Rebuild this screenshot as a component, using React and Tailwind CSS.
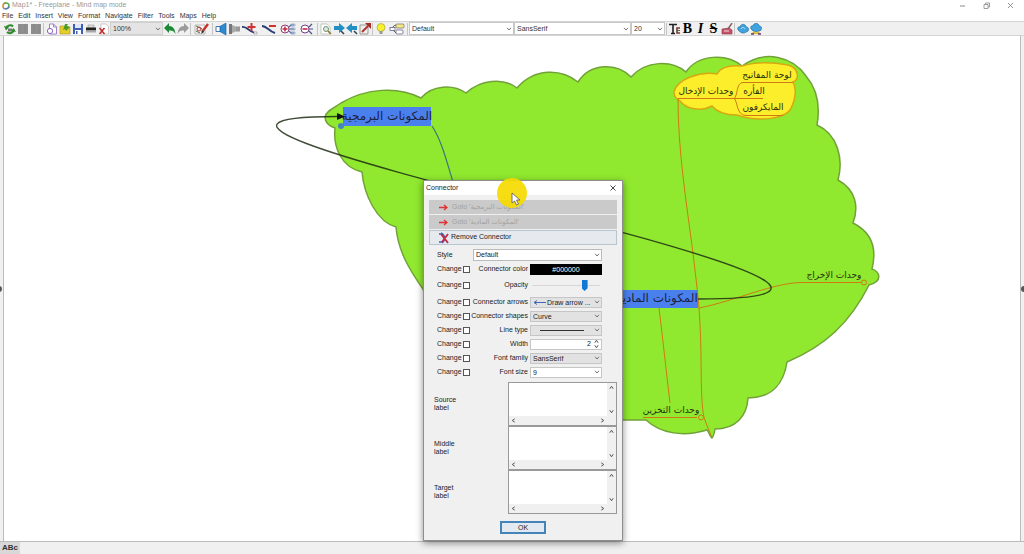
import { useState } from "react";

const MENUS = ["File", "Edit", "Insert", "View", "Format", "Navigate", "Filter", "Tools", "Maps", "Help"];

function Chevron({ className = "" }) {
  return (
    <svg viewBox="0 0 6 4" className={`pointer-events-none h-1 w-1.5 fill-none stroke-[#666] ${className}`}>
      <path d="M1 .8 3 3 5 .8" strokeWidth=".9" />
    </svg>
  );
}

function Select({ label, options, id, className = "", wrap = "" }) {
  return (
    <span className={`relative flex items-center ${wrap}`}>
      <select
        id={id}
        aria-label={label}
        className={`w-full appearance-none rounded-none border pl-0.5 outline-none ${className}`}
      >
        {options.map((o) => (
          <option key={o}>{o}</option>
        ))}
      </select>
      <Chevron className="absolute right-0.5" />
    </span>
  );
}

function Tool({ label, children, wide }) {
  return (
    <button
      type="button"
      aria-label={label}
      className={`flex h-3.5 shrink-0 items-center justify-center ${wide ? "w-[19px]" : "w-[13px]"}`}
    >
      <svg viewBox={wide ? "0 0 16 12" : "0 0 12 12"} className={`h-3 fill-none ${wide ? "w-4" : "w-3"}`}>
        {children}
      </svg>
    </button>
  );
}

function Sep() {
  return <span className="mx-px h-3 w-px shrink-0 bg-[#c4c4c4]" />;
}

function ToolBar() {
  return (
    <div className="flex h-[15px] items-center border-y border-[#d4d4d4] bg-[#f0f0f0] pl-[3px] text-[7px]">
      <Tool label="Reload">
        <path d="M2 5.5C3 2 7 1.500 9 3.500M10 6.500C9 10.500 5 11 3 9" stroke="#2f8a2c" strokeWidth="2" />
        <path d="M0 3 2 7.500 5 4ZM12 9 9.500 5 7 8Z" fill="#2f8a2c" />
        <path d="M4 5.500h4v3H4z" fill="#777" />
      </Tool>
      <Tool label="Previous map">
        <path d="M1 1h10v10H1z" fill="#8f8f8f" />
        <path d="M3 2v9M8 1v9" stroke="#868686" />
      </Tool>
      <Tool label="Next map">
        <path d="M1 1h10v10H1z" fill="#8f8f8f" />
        <path d="M4 1v9M9 2v9" stroke="#868686" />
      </Tool>
      <Sep />
      <Tool label="New map">
        <path d="M3.500 1h4l3 3v7h-7z" fill="#fff" stroke="#9d83c4" />
        <circle cx="4" cy="8" r="2.600" fill="#fff" stroke="#8d62c0" />
        <path d="M7.500 1v3h3" stroke="#9d83c4" />
      </Tool>
      <Tool label="Open map">
        <path d="M1 3h4l1 1h5v7H1z" fill="#e5ce2b" stroke="#a99318" strokeWidth=".6" />
        <path d="m6 1 3 0-1 2 3 1-4 4-1-2-2 1z" fill="#4f9c25" />
      </Tool>
      <Tool label="Save map">
        <path d="M1 1h10v10H1z" fill="#3c5fb5" />
        <path d="M3 1h6v4H3z" fill="#dfe8fa" />
        <path d="M3 7h6v4H3z" fill="#fff" />
        <path d="M4 8h1.500v3H4z" fill="#3c5fb5" />
      </Tool>
      <Tool label="Print">
        <path d="M3 2h6v3H3z" fill="#ddd" stroke="#888" strokeWidth=".5" />
        <path d="M1 4.500h10v3H1z" fill="#222" />
        <path d="M1 7.500h10v2H1z" fill="#aaa" />
      </Tool>
      <Tool label="Close map">
        <path d="M3 1h5l2.500 2.500V11H3z" fill="#fff" stroke="#b9b9b9" strokeWidth=".7" />
        <path d="m1.500 5 5 6M6.500 5l-5 6" stroke="#c22a2a" strokeWidth="1.500" />
      </Tool>
      <Select
        label="Zoom"
        options={["100%", "75%", "50%"]}
        wrap="w-[53px]"
        className="h-[13px] border-[#d0d0d0] bg-[#e4e4e4] leading-[11px] text-[#333]"
      />
      <Tool label="Undo">
        <path d="M0 5 5 0v3c4 0 6 3 6.500 8C10 8 8 7 5 7.500V10z" fill="#1c8a34" />
      </Tool>
      <Tool label="Redo">
        <path d="M12 5 7 0v3C3 3 1 6 .5 11 2 8 4 7 7 7.500V10z" fill="#9b9b9b" />
      </Tool>
      <Sep />
      <Tool label="Use format" wide>
        <path d="M1 2h10v9H1z" fill="#f6f0f0" stroke="#a8a8a8" strokeWidth=".7" />
        <path d="m2 3 6 3M2 8l4 2" stroke="#467a46" />
        <circle cx="5" cy="6" r="2" stroke="#b14040" />
        <path d="M14 1 8 9" stroke="#c2332b" strokeWidth="2.400" />
        <path d="m8.500 7-1.500 4 3-2z" fill="#333" />
      </Tool>
      <Sep />
      <Tool label="Fold">
        <path d="M11 0v12L4 8V4z" fill="#2a8ad2" stroke="#1a5a9b" strokeWidth=".6" />
        <path d="M1 3.500h4v5H1z" fill="#fff" stroke="#1a5a9b" strokeWidth=".8" />
      </Tool>
      <Tool label="Unfold">
        <path d="M1 1h3v10H1z" fill="#777" />
        <path d="m4 2 5 2v4l-5 2z" fill="#aaa" />
        <path d="M8 3.500h4v5H8z" fill="#999" />
      </Tool>
      <Tool label="New child node" wide>
        <path d="M0 4c5-1 6 4 13 6" stroke="#293c72" strokeWidth="1.800" />
        <path d="M9.500 0v8M5.500 4h8" stroke="#d23030" strokeWidth="2" />
        <path d="M12 9h3v2h-3z" fill="#fff" stroke="#777" strokeWidth=".5" />
      </Tool>
      <Tool label="Remove node" wide>
        <path d="M1 3c5 0 6 5 13 7" stroke="#293c72" strokeWidth="1.900" />
        <path d="M8 3h7" stroke="#d23030" strokeWidth="2" />
      </Tool>
      <Tool label="Unfold all" wide>
        <circle cx="5" cy="6" r="4" fill="#fff" stroke="#8b3b70" />
        <path d="M2.500 6h5M5 3.500v5" stroke="#c22944" strokeWidth="1.500" />
        <path d="M9 4l2-2h3M9 6h5M9 8l2 2h3" stroke="#4668ae" strokeWidth="1.200" />
        <path d="M11 1h4v2h-4zM11 5h4v2h-4zM11 9h4v2h-4z" stroke="#7890be" strokeWidth=".6" />
      </Tool>
      <Tool label="Fold all" wide>
        <circle cx="6" cy="6" r="4" fill="#fff" stroke="#704080" />
        <path d="M3.500 6h5" stroke="#c22944" strokeWidth="1.600" />
        <path d="m10 4 3-3M10 6h4M10 8l3 3" stroke="#46518e" strokeWidth="1.200" />
      </Tool>
      <Sep />
      <Tool label="Find">
        <path d="M1 1h6l3 3v7H1z" fill="#fff" stroke="#aab7aa" strokeWidth=".7" />
        <circle cx="6" cy="6" r="2.500" fill="#dcebdc" stroke="#759075" />
        <path d="m8 8 3 3" stroke="#8a6c32" strokeWidth="1.500" />
      </Tool>
      <Tool label="Find next">
        <path d="M1 3h5V0l6 5-6 5V7H1z" fill="#248fc3" />
        <path d="m8 8 3 3" stroke="#345" strokeWidth="1.600" />
      </Tool>
      <Tool label="Find previous">
        <path d="M11 3H6V0L0 5l6 5V7h5z" fill="#248fc3" />
        <path d="m8 8 3 3" stroke="#345" strokeWidth="1.600" />
      </Tool>
      <Tool label="Edit filter">
        <path d="M1 2h8v9H1z" fill="#eee" stroke="#777" strokeWidth=".7" />
        <path d="M3 9 9 3" stroke="#b4332d" strokeWidth="2" />
        <path d="M6 0h6v6z" fill="#a92b28" />
      </Tool>
      <Sep />
      <Tool label="Tip of the day">
        <circle cx="6" cy="4.500" r="4" fill="#f6f02d" stroke="#a8a33d" strokeWidth=".7" />
        <path d="M4.500 8h3v3h-3z" fill="#999" />
      </Tool>
      <Tool label="Node details" wide>
        <path d="M1 6c3 0 3-4 6-4M2 6c3 0 3 4 6 4" stroke="#333" strokeWidth=".8" />
        <rect x="7" y="1" width="8" height="4" rx="1" fill="#f4ec80" stroke="#767" strokeWidth=".7" />
        <rect x="7" y="7" width="7" height="4" rx="1" fill="#fff" stroke="#557" strokeWidth=".7" />
        <rect x="1" y="4.500" width="5" height="3" fill="#fff" stroke="#557" strokeWidth=".7" />
      </Tool>
      <Sep />
      <Select
        label="Node style"
        options={["Default"]}
        wrap="w-[105px]"
        className="h-[13px] border-[#c8c8c8] bg-white leading-[11px] text-[#333]"
      />
      <Select
        label="Node font"
        options={["SansSerif"]}
        wrap="w-[117px]"
        className="h-[13px] border-[#c8c8c8] bg-white leading-[11px] text-[#333]"
      />
      <Select
        label="Node font size"
        options={["20", "12", "10"]}
        wrap="w-[34px]"
        className="h-[13px] border-[#c8c8c8] bg-white leading-[11px] text-[#333]"
      />
      <Sep />
      <Tool label="Text color">
        <path d="M0 1.500h8M4 1v10M2 10.500h4" stroke="#222" strokeWidth="1.600" />
        <path d="M11 5H8v5h3" stroke="#7b3b32" strokeWidth="1.600" />
        <path d="M8 7.500h3" stroke="#3c7040" />
      </Tool>
      <button type="button" aria-label="Bold" className="w-[13px] font-['Liberation_Serif',serif] text-[14px] leading-3 font-black text-black">
        B
      </button>
      <button type="button" aria-label="Italic" className="w-[13px] font-['Liberation_Serif',serif] text-[14px] leading-3 font-bold text-black italic">
        I
      </button>
      <button
        type="button"
        aria-label="Strike through"
        className="w-[13px] font-['Liberation_Serif',serif] text-[14px] leading-3 font-black text-black line-through"
      >
        S
      </button>
      <Tool label="Remove format">
        <path d="m1 6 7-1 3 2v4H1z" fill="#c8526a" stroke="#80364a" strokeWidth=".6" />
        <path d="M7 6 11 0" stroke="#8a5a5a" strokeWidth="1.400" />
        <path d="M3 8h5" stroke="#f3d8dd" />
      </Tool>
      <Sep />
      <Tool label="Cloud">
        <path d="M2 8C-1 5 2 3 3 4c1-4 6-3 6 0 4 0 3 5 0 5-2 2-5 1-7-1z" fill="#3fa3dd" stroke="#1e6ea9" strokeWidth=".7" />
        <path d="M4 6c1-2 3-2 4 0" stroke="#c6e8fa" />
      </Tool>
      <Tool label="Cloud color">
        <path d="M2 7C-1 4 2 2 3 3c1-4 6-3 6 0 4 0 3 5 0 5-2 1-5 1-7-1z" fill="#3fa3dd" stroke="#1e6ea9" strokeWidth=".7" />
        <path d="m1 11 3-3 2 2 2-2 3 3z" fill="#d9b32c" />
        <path d="M1 11h3M8 11h3" stroke="#6a3b7c" strokeWidth="1.500" />
      </Tool>
    </div>
  );
}

function MindMap() {
  return (
    <svg
      viewBox="4 36 1016 505"
      preserveAspectRatio="xMinYMin meet"
      className="absolute inset-0 h-full w-full fill-none font-['DejaVu_Sans','Noto_Sans',sans-serif]"
    >
      {/* Cloud */}
      <path
        d="M325 117C326 111 334 108 341 103C366 88 398 86 421 98C432 85 453 84 466 93C480 80 503 77 517 88C534 68 561 68 578 82C590 63 617 62 631 77C646 60 672 60 686 72C698 54 727 53 742 66C765 49 793 57 806 76C818 90 820 108 817 125C837 134 844 158 838 180C856 190 859 207 853 223C875 234 876 253 872 269C879 271 884 281 869 285C850 323 825 346 787 362C784 382 773 398 748 398C747 416 736 429 715 429C714 435 713 437 712 438C710 437 709 432 707 430C684 437 661 434 646 420H560C480 400 440 350 423 289C411 272 398 252 396 227C377 222 364 195 362 172C341 167 333 147 335 128C329 126 325 122 325 117Z"
        fill="#90e92f"
        stroke="#72a13a"
        strokeWidth="1.500"
      />
      <path
        d="M674 92C677 79 700 71 717 74C721 66 731 65 742 66C758 61 777 63 788 65C800 68 799 81 793 82C797 89 795 100 792 106C788 120 756 122 737 115C725 115 716 111 712 106C701 112 686 109 680 101C676 99 674 96 674 92Z"
        fill="#fdee2b"
        stroke="#d6a912"
        strokeWidth="1.500"
      />

      {/* Edges */}
      <g stroke="#cf7a14">
        <path d="M763 98.500H678C678 150 686 200 693 253C696 280 699 300 700 325C702 360 700 400 704 417C706 424 709 430 712 438" />
        <path d="M734 98.500C738 96 736 82.500 743 82.500H793M734 98.500C738 101 736 115.500 746 115.500H783" />
        <path d="M699 308C735 301 775 282 803 282.500H861" />
        <path d="M659 308C663 340 666 370 670 403M643 417.500H697" />
        <circle cx="864" cy="282.500" r="2.500" />
        <circle cx="701" cy="417.500" r="2.500" />
      </g>
      <path d="M432 126C442 141 447 163 453 182" stroke="#39797a" strokeWidth="1.200" />

      {/* Nodes */}
      <path d="M343 107h88v19h-88zM600 290h98v18h-98z" fill="#4a80ee" />
      <circle cx="341" cy="126" r="3" fill="#4784bc" />
      <g fill="#1c2340" textAnchor="middle" fontSize="12">
        <text x="387" y="120">المكونات البرمجية</text>
        <text x="657" y="302">المكونات المادية</text>
      </g>
      <g fill="#26300c" textAnchor="middle" fontSize="9">
        <text x="767" y="78">لوحة المفاتيح</text>
        <text x="706" y="94">وحدات الإدخال</text>
        <text x="754" y="94">الفأره</text>
        <text x="763" y="110">المايكرفون</text>
        <text x="834" y="278">وحدات الإخراج</text>
        <text x="671" y="413">وحدات التخزين</text>
      </g>

      {/* Connector */}
      <path d="M698 299C1046 299 22 116 338 116.500" stroke="#1d2d14" strokeOpacity=".85" strokeWidth="1.400" />
      <path d="M337 113v7l8-3.500z" fill="#111" />
    </svg>
  );
}

function Row({ id, label, children, tall }) {
  return (
    <div className={`flex items-center ${tall ? "h-[19px]" : "h-3.5"}`}>
      <label className="flex w-[33px] shrink-0 items-center justify-between">
        Change
        <input type="checkbox" className="size-[7px] appearance-none border border-[#555] bg-white checked:bg-[#444]" />
      </label>
      <label htmlFor={id} className="flex-1 pr-0.5 text-right whitespace-nowrap">
        {label}
      </label>
      <div className="w-[72px] shrink-0">{children}</div>
    </div>
  );
}

function Arrow({ className = "" }) {
  return (
    <svg viewBox="0 0 6 6" className={`size-[5px] fill-none stroke-[#555] ${className}`}>
      <path d="M1 4.500 3 1.500 5 4.500" strokeWidth="1.200" />
    </svg>
  );
}

function LabelArea({ id, label }) {
  return (
    <div className="flex items-center">
      <label htmlFor={id} className="w-[79px] pr-12 pl-[5px] leading-2">
        {label}
      </label>
      <div className="grid h-[44px] flex-1 grid-cols-[1fr_9px] grid-rows-[1fr_9px] border border-[#999] bg-[#f0f0f0]">
        <textarea id={id} className="resize-none bg-white p-0.5 outline-none" />
        <div className="flex flex-col items-center justify-between py-0.5">
          <Arrow />
          <Arrow className="rotate-180" />
        </div>
        <div className="flex items-center justify-between px-0.5">
          <Arrow className="-rotate-90" />
          <Arrow className="rotate-90" />
        </div>
      </div>
    </div>
  );
}

function GotoButton({ children }) {
  return (
    <button
      type="button"
      disabled
      className="flex h-3.5 w-full items-center gap-1 bg-[#cacaca] pl-2.5 text-[#a2a2a2]"
    >
      <svg viewBox="0 0 9 7" className="h-[7px] w-[9px] fill-none stroke-[#d33]">
        <path d="M0 3.500h7M5 1l3 2.500L5 6" strokeWidth="1.300" />
      </svg>
      <span>{children}</span>
    </button>
  );
}

function ConnectorDialog() {
  const [opacity, setOpacity] = useState(80);
  const gray = "h-[11px] border-[#c6c6c6] bg-[#e2e2e2]";

  return (
    <div
      role="dialog"
      aria-label="Connector"
      className="absolute top-[144px] left-[419px] w-[200px] border border-[#8d8d8d] bg-[#f0f0f0] text-[7px] text-[#222] shadow-[0_2px_7px_rgba(0,0,0,0.45)]"
    >
      <div className="flex h-3.5 items-center justify-between bg-white pr-1.5 pl-0.5">
        <span>Connector</span>
        <button type="button" aria-label="Close">
          <svg viewBox="0 0 6 6" className="size-1.5 stroke-[#333]">
            <path d="m.5.5 5 5M5.500.5l-5 5" strokeWidth=".9" />
          </svg>
        </button>
      </div>

      <div className="px-[5px] pt-[5px] pb-1.5">
        <div className="flex flex-col gap-px">
          <GotoButton>
            Goto <bdi>'المكونات البرمجية'</bdi>
          </GotoButton>
          <GotoButton>
            Goto <bdi>'المكونات المادية'</bdi>
          </GotoButton>
          <button type="button" className="flex h-[15px] items-center gap-px border border-[#b9c6d0] bg-[#e6eaee] pl-2">
            <svg viewBox="0 0 12 12" className="size-3 fill-none">
              <path d="M1 2h3M1 10h4M3 1c4 2 5 7 1 10" stroke="#3564bd" strokeWidth="1.500" />
              <path d="m3 2 7 9M10 2 4 10" stroke="#cc2942" strokeWidth="1.900" />
            </svg>
            Remove Connector
          </button>
        </div>

        <div className="mt-[3px] pr-[15px] pl-2">
          <div className="flex h-3.5 items-center">
            <label htmlFor="style" className="w-9">
              Style
            </label>
            <Select id="style" options={["Default"]} wrap="flex-1" className="h-3 border-[#bbb] bg-white" />
          </div>
          <Row id="color" label="Connector color">
            <button id="color" type="button" className="block h-[11px] w-full bg-black leading-[11px] text-white">
              #000000
            </button>
          </Row>
          <Row id="opacity" label="Opacity" tall>
            <input
              id="opacity"
              type="range"
              value={opacity}
              onChange={(e) => setOpacity(e.target.value)}
              className="block h-3 w-full appearance-none bg-transparent px-0.5 [&::-webkit-slider-runnable-track]:h-px [&::-webkit-slider-runnable-track]:bg-[#d6d6d6] [&::-webkit-slider-thumb]:-mt-[5px] [&::-webkit-slider-thumb]:h-[11px] [&::-webkit-slider-thumb]:w-1.5 [&::-webkit-slider-thumb]:appearance-none [&::-webkit-slider-thumb]:bg-[#1278d4] [&::-webkit-slider-thumb]:[clip-path:polygon(0_0,100%_0,100%_75%,50%_100%,0_75%)]"
            />
          </Row>
          <Row id="arrows" label="Connector arrows">
            <div className="relative">
              <Select id="arrows" options={["Draw arrow ..."]} className={`${gray} indent-3.5`} />
              <svg viewBox="0 0 12 5" className="pointer-events-none absolute top-[3px] left-1 h-[5px] w-3 fill-none stroke-[#4169b8]">
                <path d="M0 2.500h12M3 .5l-3 2 3 2" />
              </svg>
            </div>
          </Row>
          <Row id="shapes" label="Connector shapes">
            <Select id="shapes" options={["Curve", "Line"]} className={gray} />
          </Row>
          <Row id="line" label="Line type">
            <div className="relative">
              <Select id="line" options={[""]} className={gray} />
              <svg viewBox="0 0 44 2" className="pointer-events-none absolute top-[5px] left-2.5 h-0.5 w-11 stroke-[#333]">
                <path d="M0 .5h44" />
              </svg>
            </div>
          </Row>
          <Row id="width" label="Width">
            <div className="flex h-[11px] items-center border border-[#c6c6c6] bg-white">
              <input id="width" type="text" defaultValue="2" className="min-w-0 flex-1 text-right outline-none" />
              <span className="flex w-2.5 flex-col items-center">
                <Arrow />
                <Arrow className="rotate-180" />
              </span>
            </div>
          </Row>
          <Row id="family" label="Font family">
            <Select id="family" options={["SansSerif"]} className={gray} />
          </Row>
          <Row id="size" label="Font size">
            <Select id="size" options={["9", "10", "12"]} className="h-[11px] border-[#c6c6c6] bg-white" />
          </Row>
        </div>

        <div className="mt-[3px]">
          <LabelArea id="source" label="Source label" />
          <LabelArea id="middle" label="Middle label" />
          <LabelArea id="target" label="Target label" />
        </div>

        <button
          type="button"
          className="mx-auto mt-[7px] block h-[13px] w-[46px] border-2 border-[#4584b8] bg-[#e2e9f0] leading-2"
        >
          OK
        </button>
      </div>

      {/* Mouse pointer with highlight */}
      <svg viewBox="0 0 32 32" className="pointer-events-none absolute -top-1 left-[72px] size-8">
        <circle cx="16" cy="16" r="15" fill="#f5da00" fillOpacity=".92" />
        <path d="M16 16v10l2.500-2 2 4 2-1-2-4h3.500z" fill="#fff" stroke="#555" strokeWidth=".8" />
      </svg>
    </div>
  );
}

export default function App() {
  return (
    <div className="flex h-screen flex-col overflow-hidden bg-[#f0f0f0] font-['Liberation_Sans','DejaVu_Sans',sans-serif] text-[#333]">
      {/* Title bar */}
      <header className="flex h-[11px] items-center bg-white pr-2.5 pl-0.5 text-[7px] text-[#999]">
        <svg viewBox="0 0 10 10" className="mr-0.5 size-2 fill-none">
          <path d="M5 1C1 1 0 6 3 9" stroke="#d28a35" strokeWidth="2" />
          <path d="M3 2c4-2 7 1 5 5" stroke="#59a84a" strokeWidth="2" />
          <path d="M3 8c2 1 4 1 6-2" stroke="#567bb8" strokeWidth="2" />
        </svg>
        <h1 className="flex-1">Map1* - Freeplane - Mind map mode</h1>
        <div className="flex gap-[17px]">
          <button type="button" aria-label="Minimize">
            <svg viewBox="0 0 7 7" className="size-[7px] stroke-[#888]">
              <path d="M1 4h5" />
            </svg>
          </button>
          <button type="button" aria-label="Restore">
            <svg viewBox="0 0 7 7" className="size-[7px] fill-none stroke-[#888]">
              <path d="M1 2.500h4v4H1zM2.500 2V1H6.500v4H5" strokeWidth=".8" />
            </svg>
          </button>
          <button type="button" aria-label="Close window">
            <svg viewBox="0 0 7 7" className="size-[7px] stroke-[#888]">
              <path d="m1 1 5 5M6 1 1 6" strokeWidth=".9" />
            </svg>
          </button>
        </div>
      </header>

      <nav className="flex h-[10px] items-center gap-[5px] bg-white pl-0.5 text-[7px]">
        {MENUS.map((m) => (
          <button key={m} type="button">
            {m}
          </button>
        ))}
      </nav>

      <ToolBar />

      <div className="flex min-h-0 flex-1">
        <div className="flex w-1 items-center overflow-hidden border-r border-[#bbb]">
          <span className="-ml-1 size-1.5 shrink-0 rounded-full bg-[#555]" />
        </div>
        <main className="relative flex-1 bg-white">
          <MindMap />
          <ConnectorDialog />
        </main>
        <div className="flex w-1 items-center overflow-hidden border-l border-[#bbb]">
          <span className="size-1.5 shrink-0 rounded-full bg-[#555]" />
        </div>
      </div>

      <footer className="flex h-[13px] items-center border-t border-[#bbb]">
        <button type="button" className="h-3 bg-[#d8d8d8] px-0.5 text-[8px] leading-3 font-bold">
          ABc
        </button>
      </footer>
    </div>
  );
}
